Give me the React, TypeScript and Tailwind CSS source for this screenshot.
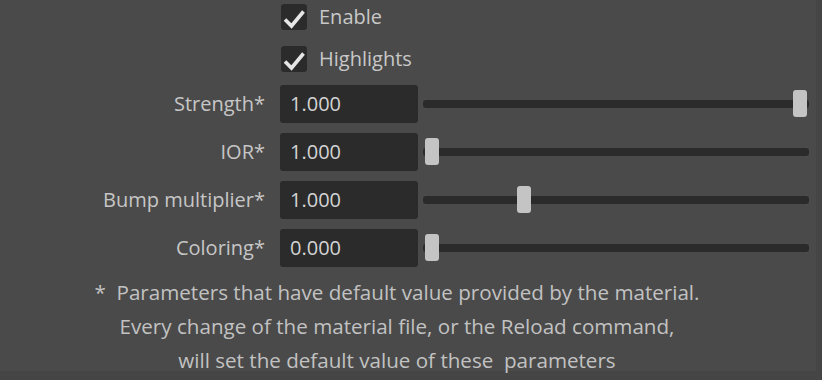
import React from 'react'

const rows = [
  { label: 'Strength*', value: '1.000', pos: 1 },
  { label: 'IOR*', value: '1.000', pos: 0 },
  { label: 'Bump multiplier*', value: '1.000', pos: 0.25 },
  { label: 'Coloring*', value: '0.000', pos: 0 },
]

function Check({ label }: { label: string }) {
  return (
    <div className="flex items-center h-[26px]">
      <div className="ml-[1px] w-[26px] h-[26px] rounded-[3px] bg-[#2b2b2b] flex items-center justify-center">
        <svg width="26" height="26" viewBox="0 0 26 26">
          <polyline points="4,15.5 10.5,22 22.5,7.5" fill="none" stroke="#e6e6e6" strokeWidth="3.6" strokeLinejoin="miter" strokeLinecap="butt" />
        </svg>
      </div>
      <span className="ml-[12px] text-[#c8c8c8]">{label}</span>
    </div>
  )
}

function Slider({ pos }: { pos: number }) {
  // handle runs from 2px to 370px inside the 386px track
  const left = 2 + pos * 368
  return (
    <div className="relative w-[386px] h-[38px] flex items-center">
      <div className="w-full h-[8px] rounded-[3px] bg-[#2b2b2b]" />
      <div
        className="absolute top-[5px] w-[14px] h-[27px] rounded-[3px] bg-[#c4c4c4]"
        style={{ left }}
      />
    </div>
  )
}

export default function App() {
  return (
    <div className="w-[822px] h-[380px] bg-[#454545] overflow-hidden text-[20px] leading-none" style={{ fontFamily: '"Open Sans", sans-serif' }}>
      <div className="w-[816px] h-[371px] bg-[#4a4a4a] pt-[4px]">
        <div className="grid grid-cols-[265px_138px_386px] gap-x-[15px]">
          <div />
          <div className="col-span-2 h-[42px]">
            <Check label="Enable" />
          </div>
          <div />
          <div className="col-span-2 h-[39px]">
            <Check label="Highlights" />
          </div>
        </div>

        <div className="grid grid-cols-[265px_138px_386px] gap-y-[10px] [column-gap:0]">
          {rows.map((r) => (
            <React.Fragment key={r.label}>
              <div className="h-[38px] flex items-center justify-end text-[#c6c6c6] whitespace-nowrap">{r.label}</div>
              <div className="ml-[15px] w-[138px] h-[38px] rounded-[3px] bg-[#2b2b2b] flex items-center pl-[10px] text-[#d4d4d4]">
                {r.value}
              </div>
              <div className="ml-[20px]">
                <Slider pos={r.pos} />
              </div>
            </React.Fragment>
          ))}
        </div>

        <div className="mt-[8px] w-[794px] flex flex-col items-center text-[#c2c2c2] text-[20.6px] leading-[34px] whitespace-pre">
          <div>*  Parameters that have default value provided by the material.</div>
          <div>Every change of the material file, or the Reload command,</div>
          <div>will set the default value of these  parameters</div>
        </div>
      </div>
    </div>
  )
}
